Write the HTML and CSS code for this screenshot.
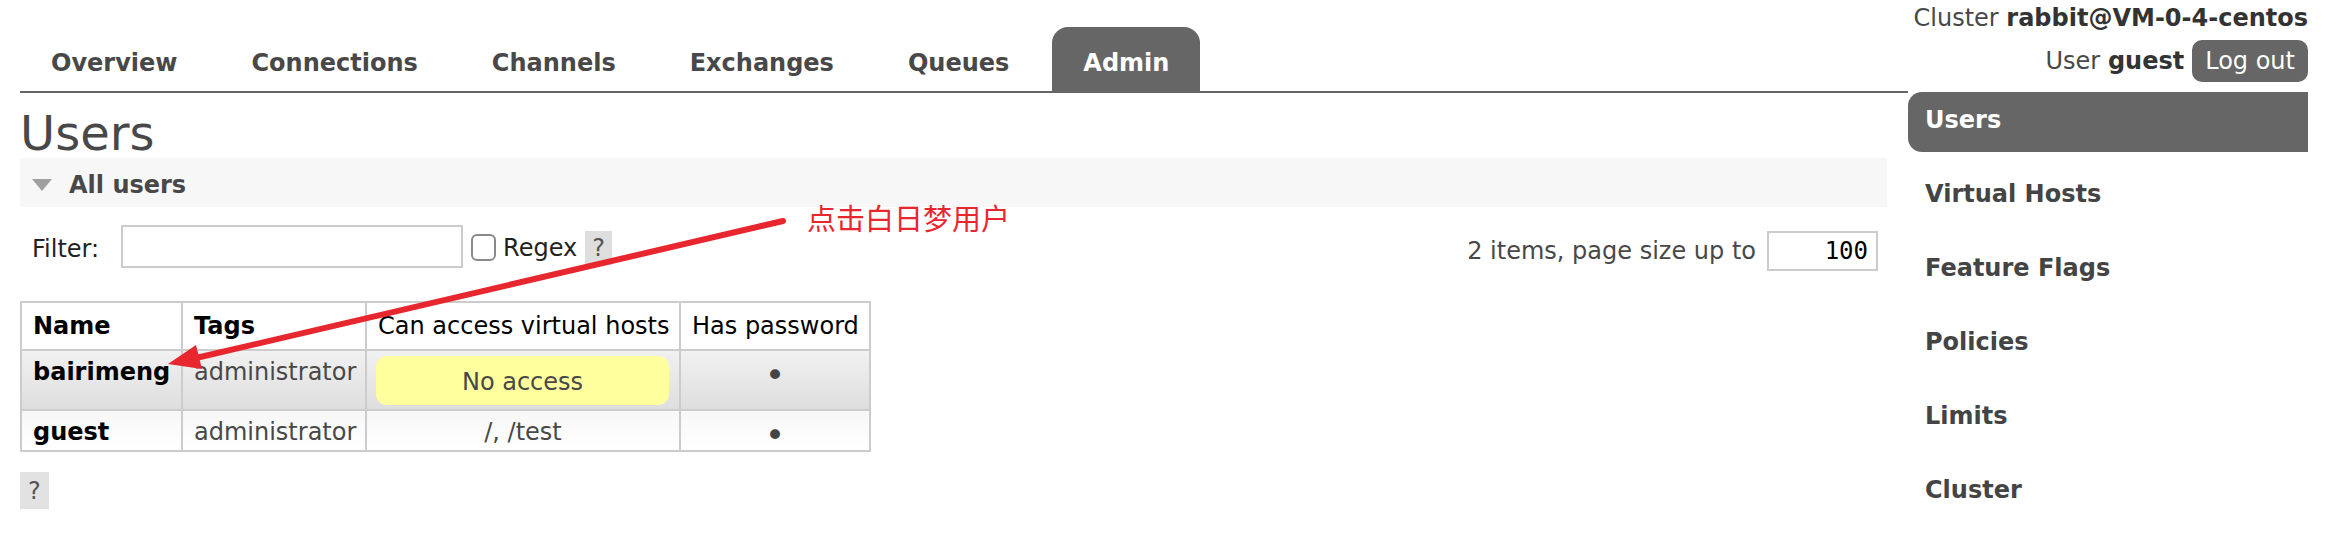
FILE: index.html
```html
<!DOCTYPE html>
<html lang="en">
<head>
<meta charset="utf-8">
<title>RabbitMQ Management - Users</title>
<link rel="stylesheet" href="styles.css">
</head>
<body>
<div class="page">
  <header class="header">
    <nav class="tabs">
      <a class="tab" href="#">Overview</a>
      <a class="tab" href="#">Connections</a>
      <a class="tab" href="#">Channels</a>
      <a class="tab" href="#">Exchanges</a>
      <a class="tab" href="#">Queues</a>
      <a class="tab selected" href="#">Admin</a>
    </nav>
    <div class="status">
      <div class="cluster">Cluster <b>rabbit@VM-0-4-centos</b></div>
      <div class="user-row"><span>User <b>guest</b></span><button class="logout">Log out</button></div>
    </div>
  </header>
  <div class="content">
    <main class="main">
      <h1 class="title">Users</h1>
      <div class="section-h"><span class="tri"></span><span>All users</span></div>
      <div class="filter-row">
        <div class="filter-left">
          <label class="flabel">Filter:</label>
          <input class="finput" type="text">
          <span class="cb"></span>
          <span class="regex">Regex</span>
          <span class="help">?</span>
        </div>
        <div class="filter-right">
          <span>2 items, page size up to</span>
          <input class="psize" type="text" value="100">
        </div>
      </div>
      <table class="users">
        <colgroup><col class="c1"><col class="c2"><col class="c3"><col class="c4"></colgroup>
        <thead>
          <tr><th class="b">Name</th><th class="b">Tags</th><th>Can access virtual hosts</th><th>Has password</th></tr>
        </thead>
        <tbody>
          <tr class="r1"><td class="name">bairimeng</td><td>administrator</td><td class="vh"><div class="noaccess">No access</div></td><td class="ctr"><span class="dot">•</span></td></tr>
          <tr class="r2"><td class="name">guest</td><td>administrator</td><td class="ctr">/, /test</td><td class="ctr"><span class="dot">•</span></td></tr>
        </tbody>
      </table>
      <div class="help help-bottom">?</div>
    </main>
    <aside class="rhs">
      <a class="side selected" href="#">Users</a>
      <a class="side" href="#">Virtual Hosts</a>
      <a class="side" href="#">Feature Flags</a>
      <a class="side" href="#">Policies</a>
      <a class="side" href="#">Limits</a>
      <a class="side" href="#">Cluster</a>
    </aside>
  </div>
</div>
<div class="note">点击白日梦用户</div>
<svg class="arrow" width="2326" height="560" viewBox="0 0 2326 560">
  <line x1="783" y1="221" x2="196" y2="358" stroke="#e8262e" stroke-width="6" stroke-linecap="round"/>
  <polygon points="168,364 202,369 196,345" fill="#e8262e"/>
</svg>
</body>
</html>
```
FILE: styles.css
```css
html, body {
  margin: 0;
  padding: 0;
  background: #fff;
}
body {
  font-family: "DejaVu Sans", Verdana, sans-serif;
  font-size: 24px;
  line-height: 28px;
  color: #484848;
  position: relative;
  width: 2326px;
  height: 560px;
  overflow: hidden;
}
.page {
  padding: 0 18px 0 20px;
}
.header {
  display: flex;
  justify-content: space-between;
  align-items: flex-start;
}
.tabs {
  display: flex;
  gap: 12px;
  padding-top: 27px;
}
.tab {
  display: block;
  padding: 22px 31px 14px;
  font-weight: bold;
  color: #484848;
  text-decoration: none;
}
.tab.selected {
  background: #666;
  color: #fff;
  border-radius: 16px 16px 0 0;
}
.status {
  text-align: right;
  padding-top: 4px;
}
.cluster b, .user-row b { color: #333; }
.user-row {
  display: flex;
  justify-content: flex-end;
  align-items: center;
  gap: 8px;
  margin-top: 8px;
}
.logout {
  font-family: inherit;
  font-size: 24px;
  line-height: 42px;
  height: 42px;
  padding: 0 13px;
  border: 0;
  border-radius: 10px;
  background: #666;
  color: #fff;
}
.content {
  display: flex;
}
.main {
  flex: 1;
  border-top: 2px solid #666;
  padding-right: 21px;
}
.title {
  font-size: 48px;
  font-weight: normal;
  line-height: 36px;
  margin: 22px 0 7px 0;
  color: #484848;
}
.section-h {
  display: flex;
  align-items: center;
  gap: 17px;
  background: #f7f7f7;
  padding: 5px 0 0 12px;
  line-height: 44px;
  font-weight: bold;
}
.tri {
  width: 0;
  height: 0;
  border-left: 10px solid transparent;
  border-right: 10px solid transparent;
  border-top: 12px solid #a0a0a0;
}
.filter-row {
  display: flex;
  justify-content: space-between;
  align-items: flex-start;
  height: 43px;
  margin-top: 18px;
}
.filter-left {
  display: flex;
  align-items: center;
  height: 43px;
  padding-left: 12px;
  color: #222;
}
.flabel {
  position: relative;
  top: 2px;
}
.finput {
  box-sizing: border-box;
  width: 342px;
  height: 43px;
  margin: 0 8px 0 22px;
  border: 2px solid #ccc;
  padding: 0 6px;
  font-family: inherit;
  font-size: 24px;
}
.cb {
  box-sizing: border-box;
  width: 25px;
  height: 27px;
  border: 2px solid #8a8a8a;
  border-radius: 6px;
  background: #fff;
  margin: 2px 7px 0 0;
}
.regex { margin: 2px 8px 0 0; }
.help {
  display: inline-block;
  background: #dedede;
  color: #555;
  padding: 3px 7px;
  line-height: 28px;
}
.filter-left .help { margin-top: 2px; }
.filter-right {
  display: flex;
  align-items: center;
  gap: 11px;
  margin-top: 6px;
  margin-right: 9px;
  color: #484848;
}
.psize {
  box-sizing: border-box;
  width: 111px;
  height: 40px;
  border: 2px solid #ccc;
  padding: 0 8px;
  text-align: right;
  font-family: "DejaVu Sans Mono", monospace;
  font-size: 24px;
  color: #000;
}
.users {
  margin-top: 33px;
  border-collapse: collapse;
  table-layout: fixed;
  width: 849px;
  border: 2px solid #ccc;
}
.c1 { width: 161px; }
.c2 { width: 184px; }
.c3 { width: 314px; }
.c4 { width: 190px; }
.users th, .users td {
  border: 2px solid #ccc;
  text-align: left;
  vertical-align: top;
  white-space: nowrap;
}
.users th {
  font-weight: normal;
  color: #000;
  padding: 9px 11px;
  background: #fff;
}
.users th.b { font-weight: bold; }
.users td {
  padding: 7px 11px 4px;
}
.users td.name {
  font-weight: bold;
  color: #000;
}
.users td.ctr { text-align: center; }
.users td.vh { padding: 5px 10px 4px 9px; }
.r1 td { background: linear-gradient(#f1f1f1, #dedede); }
.r2 td { background: linear-gradient(#f7f7f7, #fff); }
.noaccess {
  background: #ffff9d;
  border-radius: 11px;
  text-align: center;
  padding: 12px 0 9px;
  color: #484848;
}
.dot {
  display: inline-block;
  height: 28px;
  font-size: 34px;
  line-height: 34px;
  vertical-align: top;
  color: #444;
}
.help-bottom {
  margin-top: 20px;
  padding: 5px 8px 4px;
  background: #e2e2e2;
}
.rhs {
  width: 400px;
  padding-top: 1px;
}
.side {
  display: block;
  padding: 14px 0 18px 17px;
  margin-bottom: 14px;
  font-weight: bold;
  color: #444;
  text-decoration: none;
}
.side.selected {
  background: #666;
  color: #fff;
  border-radius: 14px 0 0 14px;
}
.note {
  position: absolute;
  left: 807px;
  top: 203px;
  font-family: "Noto Sans CJK SC", sans-serif;
  font-size: 29px;
  line-height: 29px;
  color: #e8262e;
}
.arrow {
  position: absolute;
  left: 0;
  top: 0;
  pointer-events: none;
}
```
